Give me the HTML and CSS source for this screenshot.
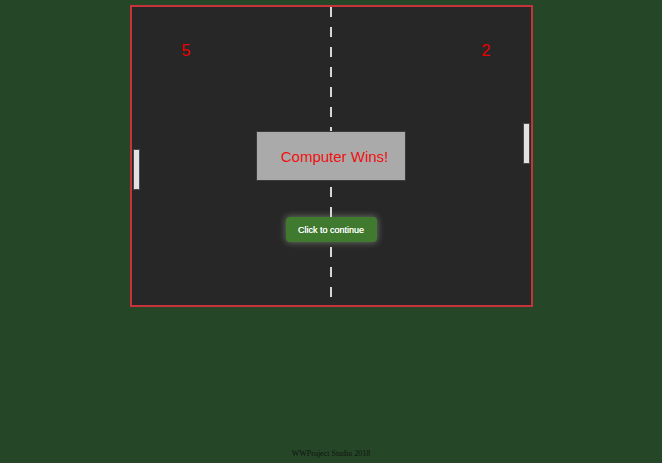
FILE: index.html
```html
<!DOCTYPE html>
<html>
<head>
<meta charset="utf-8">
<title>Pong</title>
<link rel="stylesheet" href="styles.css">
</head>
<body>
<div class="page">
  <main class="stage">
    <div class="court">
      <div class="net"></div>
      <span class="score score-left">5</span>
      <span class="score score-right">2</span>
      <div class="paddle paddle-left"></div>
      <div class="paddle paddle-right"></div>
      <div class="message">Computer Wins!</div>
      <button class="continue">Click to continue</button>
    </div>
  </main>
  <footer class="footer">WWProject Studio 2018</footer>
</div>
</body>
</html>
```
FILE: styles.css
```css
html, body {
  margin: 0;
  padding: 0;
  background: #254727;
}
.page {
  min-height: 100vh;
  display: flex;
  flex-direction: column;
  align-items: center;
}
.stage {
  padding-top: 5px;
}
.court {
  position: relative;
  width: 399px;
  height: 298px;
  background: #272727;
  border: 2px solid #c8323a;
  overflow: hidden;
}
.net {
  position: absolute;
  left: 198px;
  top: 0;
  width: 2px;
  height: 100%;
  background: repeating-linear-gradient(to bottom, #d8d8d8 0 10px, transparent 10px 20px);
}
.score {
  position: absolute;
  top: 35px;
  font: 16px "Liberation Sans", Arial, sans-serif;
  color: #ee0000;
  line-height: 18px;
}
.score-left { left: 50px; }
.score-right { left: 350px; }
.paddle {
  position: absolute;
  width: 5px;
  height: 39px;
  background: #e2e2e2;
  border: 1px solid #4a4a4a;
  box-sizing: content-box;
}
.paddle-left { left: 1px; top: 142px; }
.paddle-right { left: 391px; top: 116px; }
.message {
  position: absolute;
  left: 124px;
  top: 124px;
  width: 140px;
  height: 48px;
  padding-left: 8px;
  background: #aaaaaa;
  border: 1px solid #3a3a3a;
  color: #f01010;
  font: 15px "Liberation Sans", Arial, sans-serif;
  display: flex;
  align-items: center;
  justify-content: center;
  box-sizing: content-box;
}
.continue {
  position: absolute;
  left: 154px;
  top: 210px;
  width: 91px;
  height: 25px;
  padding: 0;
  margin: 0;
  border: none;
  border-radius: 4px;
  background: #3f7a2f;
  color: #ffffff;
  font: 9px "Liberation Sans", Arial, sans-serif;
  text-shadow: 0 0 0.4px #fff;
  box-shadow: 0 0 6px 1px rgba(190, 200, 180, 0.4);
  cursor: pointer;
}
.footer {
  margin-top: auto;
  padding-bottom: 5px;
  font: 8px "Liberation Serif", "Times New Roman", serif;
  color: #111;
  line-height: 9px;
}
```
